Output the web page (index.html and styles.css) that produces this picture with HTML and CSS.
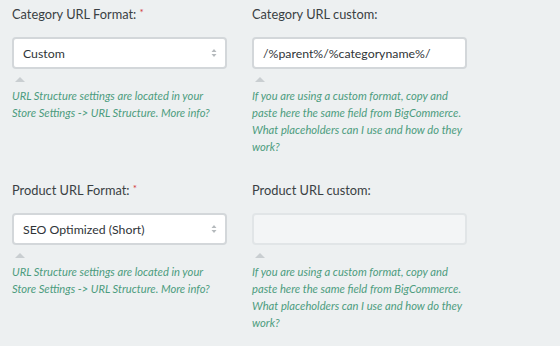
FILE: index.html
```html
<!DOCTYPE html>
<html>
<head>
<meta charset="utf-8">
<link rel="stylesheet" href="styles.css">
</head>
<body>
<div class="form">
  <div class="field">
    <div class="label">Category URL Format: <span class="req">*</span></div>
    <div class="control select"><span>Custom</span>
      <svg class="arrows" width="6" height="10" viewBox="0 0 6 10"><path d="M0.5 4 L3 1 L5.5 4 Z M0.5 6 L3 9 L5.5 6 Z" fill="#b5babd"/></svg>
    </div>
    <div class="tip"></div>
    <p class="help">URL Structure settings are located in your Store Settings -&gt; URL Structure. More info?</p>
  </div>
  <div class="field">
    <div class="label">Category URL custom:</div>
    <div class="control input"><span>/%parent%/%categoryname%/</span></div>
    <div class="tip"></div>
    <p class="help">If you are using a custom format, copy and paste here the same field from BigCommerce. What placeholders can I use and how do they work?</p>
  </div>
  <div class="field">
    <div class="label">Product URL Format: <span class="req">*</span></div>
    <div class="control select"><span>SEO Optimized (Short)</span>
      <svg class="arrows" width="6" height="10" viewBox="0 0 6 10"><path d="M0.5 4 L3 1 L5.5 4 Z M0.5 6 L3 9 L5.5 6 Z" fill="#b5babd"/></svg>
    </div>
    <div class="tip"></div>
    <p class="help">URL Structure settings are located in your Store Settings -&gt; URL Structure. More info?</p>
  </div>
  <div class="field">
    <div class="label">Product URL custom:</div>
    <div class="control input disabled"></div>
    <div class="tip"></div>
    <p class="help">If you are using a custom format, copy and paste here the same field from BigCommerce. What placeholders can I use and how do they work?</p>
  </div>
</div>
</body>
</html>
```
FILE: styles.css
```css
html, body {
  margin: 0;
  padding: 0;
  background: #edf0f1;
  font-family: Lato, "Open Sans", sans-serif;
}
.form {
  display: grid;
  grid-template-columns: 215px 215px;
  column-gap: 25px;
  row-gap: 25px;
  padding: 4px 12px 0 12px;
}
.label {
  font-size: 12.8px;
  line-height: 20px;
  color: #3a3f43;
  margin-bottom: 13px;
}
.req {
  color: #d2373c;
  font-size: 10px;
  line-height: 0;
  vertical-align: 3px;
}
.control {
  box-sizing: border-box;
  height: 32px;
  border: 2px solid #d3d7da;
  border-radius: 4px;
  background: #fff;
  display: flex;
  align-items: center;
  padding: 0 8px 0 9px;
  font-size: 12.3px;
  color: #2f3438;
}
.control span { flex: 1; }
.arrows { flex: none; }
.control.disabled {
  background: #f3f5f6;
  border-color: #e1e5e7;
}
.tip {
  width: 0;
  height: 0;
  margin: 8px 0 0 3px;
  border-left: 5px solid transparent;
  border-right: 5px solid transparent;
  border-bottom: 5px solid #c9ced1;
}
.help {
  margin: 5px 0 0 0;
  font-style: italic;
  font-size: 11.2px;
  line-height: 17px;
  color: #4c9c7e;
}
```
